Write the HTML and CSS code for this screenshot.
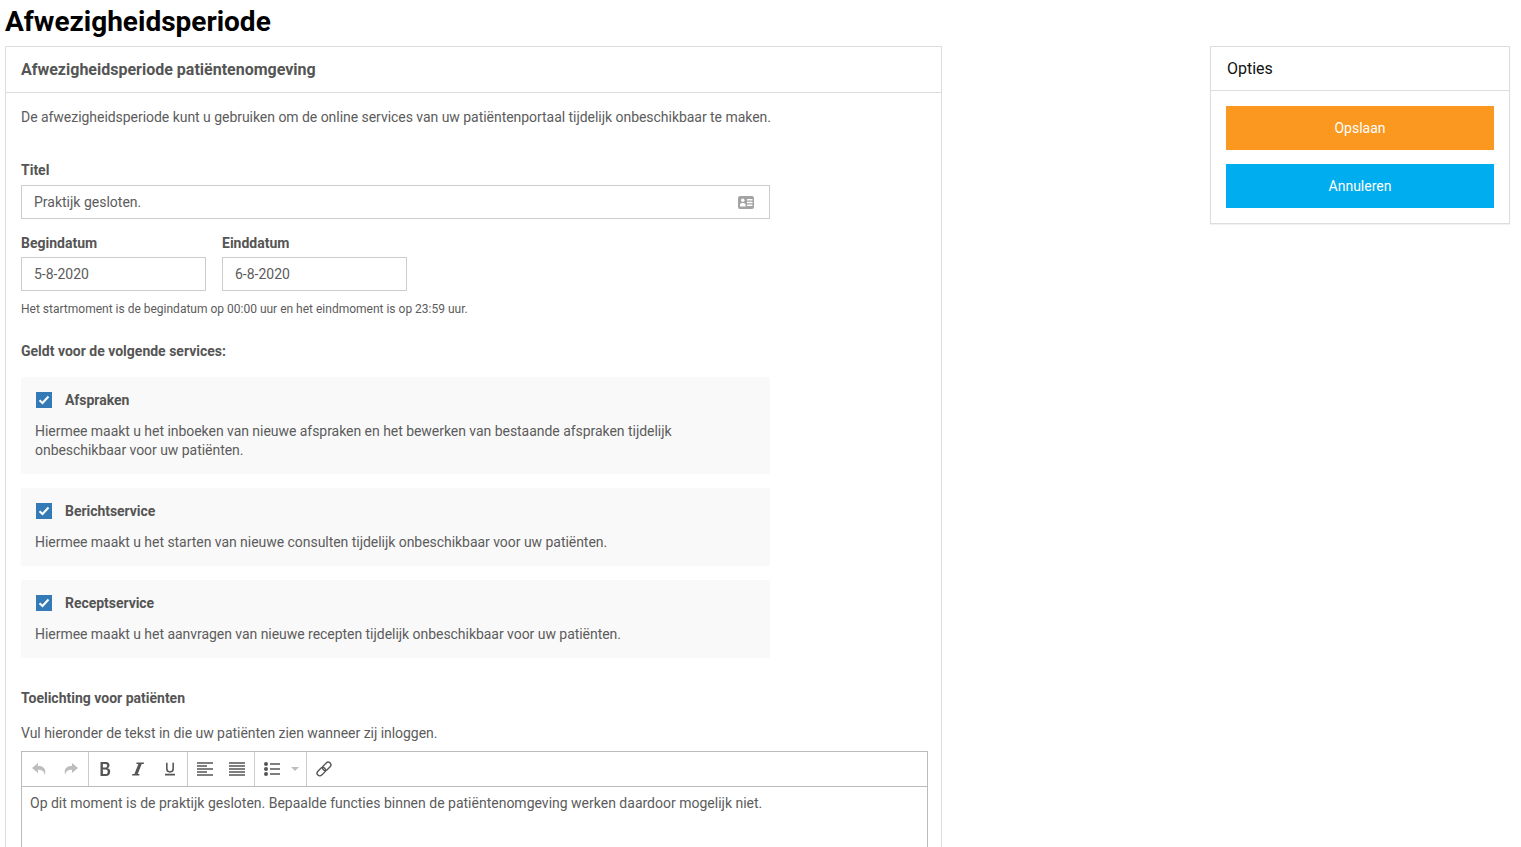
FILE: index.html
```html
<!DOCTYPE html>
<html lang="nl">
<head>
    <meta charset="UTF-8">
    <meta name="viewport" content="width=device-width, initial-scale=1.0">
    <title>Afwezigheidsperiode</title>
    <link rel="stylesheet" href="styles.css">
</head>
<body>
    <h1 class="page-title">Afwezigheidsperiode</h1>

    <div class="columns">
        <main class="panel panel-main">
            <h2 class="panel-heading">Afwezigheidsperiode patiëntenomgeving</h2>
            <div class="panel-body">
                <p class="intro">De afwezigheidsperiode kunt u gebruiken om de online services van uw patiëntenportaal tijdelijk onbeschikbaar te maken.</p>

                <label class="field-label" for="titel">Titel</label>
                <div class="input input-title">
                    <span id="titel">Praktijk gesloten.</span>
                    <svg class="input-icon" width="16" height="13" viewBox="0 0 16 13">
                        <rect width="16" height="13" rx="2" fill="#a3a3a3"/>
                        <circle cx="4.800" cy="4.300" r="1.700" fill="#fff"/>
                        <path d="M2 10.500V8.800C2 7.500 3.200 7 4.800 7s2.800.5 2.800 1.800v1.700z" fill="#fff"/>
                        <path d="M9 3h5.500v1.400H9zM9 5.800h5.500v1.400H9zM9 8.600h5.500V10H9z" fill="#fff"/>
                    </svg>
                </div>

                <div class="date-row">
                    <div class="date-field">
                        <label class="field-label">Begindatum</label>
                        <div class="input input-date">5-8-2020</div>
                    </div>
                    <div class="date-field">
                        <label class="field-label">Einddatum</label>
                        <div class="input input-date">6-8-2020</div>
                    </div>
                </div>
                <p class="help-text">Het startmoment is de begindatum op 00:00 uur en het eindmoment is op 23:59 uur.</p>

                <p class="field-label services-label">Geldt voor de volgende services:</p>

                <div class="service">
                    <div class="service-head">
                        <span class="checkbox"><svg width="12" height="10" viewBox="0 0 12 10"><path d="M1.500 5.200l3 2.800 6-6.500" fill="none" stroke="#fff" stroke-width="2"/></svg></span>
                        <span class="service-name">Afspraken</span>
                    </div>
                    <p class="service-text">Hiermee maakt u het inboeken van nieuwe afspraken en het bewerken van bestaande afspraken tijdelijk onbeschikbaar voor uw patiënten.</p>
                </div>
                <div class="service">
                    <div class="service-head">
                        <span class="checkbox"><svg width="12" height="10" viewBox="0 0 12 10"><path d="M1.500 5.200l3 2.800 6-6.500" fill="none" stroke="#fff" stroke-width="2"/></svg></span>
                        <span class="service-name">Berichtservice</span>
                    </div>
                    <p class="service-text">Hiermee maakt u het starten van nieuwe consulten tijdelijk onbeschikbaar voor uw patiënten.</p>
                </div>
                <div class="service">
                    <div class="service-head">
                        <span class="checkbox"><svg width="12" height="10" viewBox="0 0 12 10"><path d="M1.500 5.200l3 2.800 6-6.500" fill="none" stroke="#fff" stroke-width="2"/></svg></span>
                        <span class="service-name">Receptservice</span>
                    </div>
                    <p class="service-text">Hiermee maakt u het aanvragen van nieuwe recepten tijdelijk onbeschikbaar voor uw patiënten.</p>
                </div>

                <p class="field-label note-label">Toelichting voor patiënten</p>
                <p class="note-intro">Vul hieronder de tekst in die uw patiënten zien wanneer zij inloggen.</p>

                <div class="editor">
                    <div class="toolbar">
                        <div class="tool-group tool-group-history">
                            <svg width="14" height="14" viewBox="0 0 14 14"><path d="M6 1L0 6l6 5V7.800c3.500 0 6 1 6.800 5.200C14.500 7 11.500 4 6 4z" fill="#bdbdbd"/></svg>
                            <svg width="14" height="14" viewBox="0 0 14 14"><path d="M8 1l6 5-6 5V7.800C4.500 7.800 2 8.800 1.200 13-.5 7 2.500 4 8 4z" fill="#bdbdbd"/></svg>
                        </div>
                        <div class="tool-group tool-group-format">
                            <svg width="11" height="14" viewBox="0 0 11 14"><path d="M.5 0h5c2.500 0 4 1.100 4 3.300 0 1.400-.7 2.400-1.900 2.900 1.600.4 2.600 1.500 2.600 3.300C10.200 12.500 8.300 14 5.800 14H.5zM2.900 2v3.500h2.400c1.200 0 1.800-.6 1.800-1.800S6.500 2 5.300 2zM2.900 7.400V12h2.800c1.300 0 2-.8 2-2.300s-.7-2.300-2-2.300z" fill="#555"/></svg>
                            <svg width="12" height="14" viewBox="0 0 13 14"><path d="M5 0h8l-.3 1.500h-2.200L6.200 12.500h2L7.800 14H0l.4-1.500h2.200L6.900 1.500H4.700z" fill="#555"/></svg>
                            <svg width="10" height="14" viewBox="0 0 11 14"><path d="M2 0v6.800c0 2.300 1.300 3.400 3.500 3.400S9 9.100 9 6.800V0M0 13.200h11" fill="none" stroke="#555" stroke-width="1.700"/></svg>
                        </div>
                        <div class="tool-group tool-group-align">
                            <svg width="16" height="14" viewBox="0 0 16 14"><path d="M0 1h16M0 4h10M0 7h16M0 10h10M0 13h16" stroke="#555" stroke-width="1.700"/></svg>
                            <svg width="16" height="14" viewBox="0 0 16 14"><path d="M0 1h16M0 4h16M0 7h16M0 10h16M0 13h16" stroke="#555" stroke-width="1.700"/></svg>
                        </div>
                        <div class="tool-group tool-group-list">
                            <svg width="16" height="14" viewBox="0 0 16 14"><circle cx="2" cy="2" r="2" fill="#555"/><circle cx="2" cy="7" r="2" fill="#555"/><circle cx="2" cy="12" r="2" fill="#555"/><path d="M6 2h10M6 7h10M6 12h10" stroke="#555" stroke-width="1.700"/></svg>
                            <span class="caret"></span>
                        </div>
                        <div class="tool-group tool-group-link">
                            <svg width="16" height="16" viewBox="0 0 16 16"><g fill="none" stroke="#555" stroke-width="1.400"><rect x="5.900" y="2.600" width="9.600" height="5.400" rx="2.700" transform="rotate(-45 10.700 5.300)"/><rect x=".5" y="8" width="9.600" height="5.400" rx="2.700" transform="rotate(-45 5.300 10.700)"/></g></svg>
                        </div>
                    </div>
                    <div class="editor-content">Op dit moment is de praktijk gesloten. Bepaalde functies binnen de patiëntenomgeving werken daardoor mogelijk niet.</div>
                </div>
            </div>
        </main>

        <aside class="panel panel-side">
            <h2 class="side-heading">Opties</h2>
            <div class="side-body">
                <button class="btn btn-save">Opslaan</button>
                <button class="btn btn-cancel">Annuleren</button>
            </div>
        </aside>
    </div>
</body>
</html>
```

FILE: styles.css
```css
html, body {
    height: 100%;
    overflow: hidden;
}

body {
    margin: 0;
    padding: 0 11px 0 5px;
    font-family: Roboto, "Liberation Sans", sans-serif;
    font-size: 14px;
    line-height: 19px;
    color: #5c5c5c;
    background-color: #fff;
}

p {
    margin: 0;
}

.page-title {
    margin: 0;
    padding-top: 5px;
    height: 46px;
    box-sizing: border-box;
    font-size: 28px;
    line-height: 33px;
    font-weight: 700;
    color: #000;
}

.columns {
    display: flex;
    justify-content: space-between;
    align-items: flex-start;
}

.panel {
    border: 1px solid #ddd;
    box-sizing: border-box;
    background-color: #fff;
}

.panel-main {
    width: 937px;
}

.panel-side {
    width: 300px;
    box-shadow: 0 1px 1px rgba(0, 0, 0, 0.05);
}

.panel-heading {
    margin: 0;
    padding: 0 15px;
    height: 46px;
    line-height: 45px;
    box-sizing: border-box;
    border-bottom: 1px solid #ddd;
    font-size: 16px;
    font-weight: 700;
    color: #555;
}

.panel-body {
    padding: 15px 13px 0 15px;
}

.intro {
    margin-bottom: 34px;
    letter-spacing: -0.04px;
}

.field-label {
    display: block;
    font-weight: 700;
    color: #555;
    margin-bottom: 5px;
}

.input {
    border: 1px solid #ccc;
    box-sizing: border-box;
    height: 34px;
    line-height: 32px;
    padding: 0 12px;
}

.input-title {
    width: 749px;
    display: flex;
    justify-content: space-between;
    align-items: center;
    margin-bottom: 15px;
}

.input-icon {
    margin-right: 3px;
}

.date-row {
    display: flex;
    gap: 16px;
}

.date-field .field-label {
    margin-bottom: 4px;
}

.input-date {
    width: 185px;
}

.help-text {
    margin-top: 10px;
    font-size: 12px;
    line-height: 17px;
}

.services-label {
    margin-top: 24px;
    margin-bottom: 16px;
}

.service {
    width: 749px;
    box-sizing: border-box;
    background-color: #f9f9f9;
    padding: 14px 80px 9px 14px;
    margin-bottom: 14px;
    letter-spacing: -0.04px;
}

.service-head {
    display: flex;
    align-items: center;
    gap: 13px;
    margin-bottom: 12px;
}

.checkbox {
    width: 16px;
    height: 16px;
    margin-left: 1px;
    margin-bottom: 1px;
    background-color: #337ab7;
    display: flex;
    align-items: center;
    justify-content: center;
}

.service-name {
    font-weight: 700;
    color: #555;
}

.service-text {
    padding-bottom: 5px;
}

.note-label {
    margin-top: 31px;
    margin-bottom: 16px;
}

.note-intro {
    margin-bottom: 8px;
    letter-spacing: -0.04px;
}

.editor {
    border: 1px solid #bbb;
    min-height: 240px;
}

.toolbar {
    display: flex;
    height: 35px;
    box-sizing: border-box;
    border-bottom: 1px solid #bbb;
}

.tool-group {
    display: flex;
    align-items: center;
    border-right: 1px solid #ccc;
    box-sizing: border-box;
}

.tool-group-history {
    width: 67px;
    padding-left: 10px;
    gap: 18px;
}

.tool-group-format {
    width: 99px;
    padding-left: 11px;
    gap: 21px;
}

.tool-group-align {
    width: 67px;
    padding-left: 9px;
    gap: 16px;
}

.tool-group-list {
    width: 52px;
    padding-left: 9px;
    gap: 11px;
}

.tool-group-link {
    border-right: none;
    padding-left: 9px;
}

.caret {
    width: 0;
    height: 0;
    border-left: 4px solid transparent;
    border-right: 4px solid transparent;
    border-top: 4px solid #bdbdbd;
}

.editor-content {
    padding: 7px 8px;
    font-size: 14px;
    line-height: 19px;
}

.side-heading {
    margin: 0;
    padding: 0 16px;
    height: 44px;
    line-height: 43px;
    box-sizing: border-box;
    border-bottom: 1px solid #ddd;
    font-size: 16px;
    font-weight: 400;
    color: #111;
}

.side-body {
    padding: 15px;
    display: flex;
    flex-direction: column;
    gap: 14px;
}

.btn {
    height: 44px;
    border: none;
    color: #fff;
    font-family: inherit;
    font-size: 14px;
    font-weight: 400;
}

.btn-save {
    background-color: #fb9820;
}

.btn-cancel {
    background-color: #00adef;
}
```
